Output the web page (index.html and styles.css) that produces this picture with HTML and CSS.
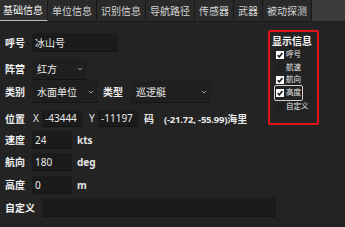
FILE: index.html
```html
<!DOCTYPE html>
<html>
<head>
<meta charset="utf-8">
<link rel="stylesheet" href="styles.css">
</head>
<body>
<div class="tabs">
  <div class="tab active">基础信息</div>
  <div class="tab">单位信息</div>
  <div class="tab">识别信息</div>
  <div class="tab">导航路径</div>
  <div class="tab">传感器</div>
  <div class="tab">武器</div>
  <div class="tab">被动探测</div>
  <div class="tab-fill"></div>
</div>
<div class="content">
  <div class="top">
    <div class="form">
      <div class="row row-call">
        <span class="lbl">呼号</span>
        <div class="inp w-call">冰山号</div>
      </div>
      <div class="row row-side">
        <span class="lbl">阵营</span>
        <div class="sel w-side"><span>红方</span><svg class="chev" viewBox="0 0 6 4"><path d="M0.8 0.8 L3 3 L5.2 0.8" fill="none" stroke="#9a9a9a" stroke-width="1"/></svg></div>
      </div>
      <div class="row row-kind">
        <span class="lbl">类别</span>
        <div class="sel w-kind"><span>水面单位</span><svg class="chev" viewBox="0 0 6 4"><path d="M0.8 0.8 L3 3 L5.2 0.8" fill="none" stroke="#9a9a9a" stroke-width="1"/></svg></div>
        <span class="lbl lbl-type">类型</span>
        <div class="sel w-type"><span>巡逻艇</span><svg class="chev" viewBox="0 0 6 4"><path d="M0.8 0.8 L3 3 L5.2 0.8" fill="none" stroke="#9a9a9a" stroke-width="1"/></svg></div>
      </div>
      <div class="row row-pos">
        <span class="lbl">位置</span>
        <span class="axis">X</span>
        <div class="inp w-coord">-43444</div>
        <span class="axis axis-y">Y</span>
        <div class="inp w-coord">-11197</div>
        <span class="unit-ma">码</span>
        <span class="nm"><span class="nm-num">(-21.72, -55.99)</span>海里</span>
      </div>
    </div>
    <div class="panel">
      <div class="panel-title">显示信息</div>
      <div class="chk c1"><span class="box on"><svg viewBox="0 0 8 8"><path d="M1.6 4.2 L3.3 5.8 L6.4 2" fill="none" stroke="#111" stroke-width="1.5"/></svg></span><span>呼号</span></div>
      <div class="chk c2"><span class="box"></span><span>航速</span></div>
      <div class="chk c3"><span class="box on"><svg viewBox="0 0 8 8"><path d="M1.6 4.2 L3.3 5.8 L6.4 2" fill="none" stroke="#111" stroke-width="1.5"/></svg></span><span>航向</span></div>
      <div class="chk focus"><span class="box on"><svg viewBox="0 0 8 8"><path d="M1.6 4.2 L3.3 5.8 L6.4 2" fill="none" stroke="#111" stroke-width="1.5"/></svg></span><span>高度</span></div>
      <div class="chk c5"><span class="box"></span><span>自定义</span></div>
    </div>
  </div>
  <div class="row row-spd">
    <span class="lbl">速度</span>
    <div class="inp w-num">24</div>
    <span class="unit">kts</span>
  </div>
  <div class="row row-hdg">
    <span class="lbl">航向</span>
    <div class="inp w-num">180</div>
    <span class="unit">deg</span>
  </div>
  <div class="row row-alt">
    <span class="lbl">高度</span>
    <div class="inp w-num">0</div>
    <span class="unit">m</span>
  </div>
  <div class="row row-custom">
    <span class="lbl lbl-custom">自定义</span>
    <div class="inp w-custom"></div>
  </div>
</div>
</body>
</html>
```

FILE: styles.css
```css
* { box-sizing: border-box; }
html, body {
  margin: 0;
  padding: 0;
  background: #232323;
  width: 345px;
  height: 227px;
  overflow: hidden;
  font-family: "Noto Sans", "Noto Sans CJK SC", sans-serif;
  font-size: 10px;
  color: #e6e6e6;
}
.tabs {
  display: flex;
  height: 22px;
  background: #2a2a2a;
  border-bottom: 1px solid #1c1c1c;
}
.tab {
  display: flex;
  align-items: center;
  padding: 0 4px;
  border-right: 1px solid #1a1a1a;
  color: #d4d4d4;
  font-size: 10px;
  line-height: 1;
}
.tab.active {
  padding-left: 3px;
  color: #f2f2f2;
  background: #2e2e2e;
  border-bottom: 1px solid #bdbdbd;
}
.tab-fill {
  flex: 1;
  background: #3b3b3b;
}
.content {
  padding: 9px 0 0 0;
}
.top {
  display: flex;
  justify-content: space-between;
  padding-right: 26px;
}
.form {
  display: flex;
  flex-direction: column;
}
.row {
  display: flex;
  align-items: center;
}
.lbl {
  width: 32px;
  padding-left: 5px;
  font-weight: bold;
  color: #f0f0f0;
}
.inp, .sel {
  display: flex;
  align-items: center;
  background: #1b1b1b;
  border-radius: 2px;
  box-shadow: 0 1px 0 #141414;
  padding-left: 3px;
  color: #ececec;
}
.inp { height: 18px; }
.sel {
  height: 21px;
  justify-content: space-between;
  padding-left: 5px;
  padding-right: 4px;
  background: #1f1f1f;
}
.chev { width: 6px; height: 4px; }
.row-call { height: 18px; margin-top: 2px; }
.w-call { width: 86px; }
.row-side { margin-top: 7px; }
.w-side { width: 55px; }
.row-kind { margin-top: 2px; }
.w-kind { width: 66px; }
.lbl-type { width: 33px; padding-left: 5px; }
.w-type { width: 80px; }
.row-pos { margin-top: 8px; height: 16px; }
.row-pos .inp { height: 16px; }
.axis { width: 10px; padding-left: 1px; }
.axis-y { margin-left: 6px; }
.w-coord { width: 40px; }
.unit-ma { margin-left: 6px; width: 20px; font-weight: bold; }
.nm { font-weight: bold; }
.nm-num { font-size: 9.5px; letter-spacing: -0.2px; }
.panel {
  width: 51px;
  height: 95px;
  margin-top: -1px;
  border: 2px solid #e0141a;
  border-radius: 2px;
  padding: 3px 0 0 2px;
  display: flex;
  flex-direction: column;
  align-items: flex-start;
}
.panel-title {
  font-size: 10px;
  font-weight: bold;
  color: #f4f4f4;
  line-height: 13px;
  margin-bottom: 1px;
}
.chk {
  display: flex;
  align-items: center;
  height: 12px;
  font-size: 7.5px;
  line-height: 1;
  color: #e8e8e8;
  gap: 2px;
  margin-left: 2px;
  padding: 0 1px;
  border: 1px solid transparent;
  white-space: nowrap;
}
.c2 { margin-top: 1px; }
.chk.focus {
  border-color: #cfcfcf;
  border-radius: 2px;
  height: 16px;
  margin-top: -1px;
}
.box {
  width: 8px;
  height: 8px;
  background: #1f1f1f;
  display: flex;
  flex-shrink: 0;
}
.box.on { background: #fafafa; }
.box svg { width: 8px; height: 8px; }
.row-spd { margin-top: 5px; height: 17px; }
.row-hdg { margin-top: 5px; height: 17px; }
.row-alt { margin-top: 6px; height: 17px; }
.w-num { width: 40px; height: 17px; }
.unit { margin-left: 5px; font-weight: bold; }
.row-custom { margin-top: 5px; }
.lbl-custom { width: 42px; }
.w-custom { width: 234px; }
```
